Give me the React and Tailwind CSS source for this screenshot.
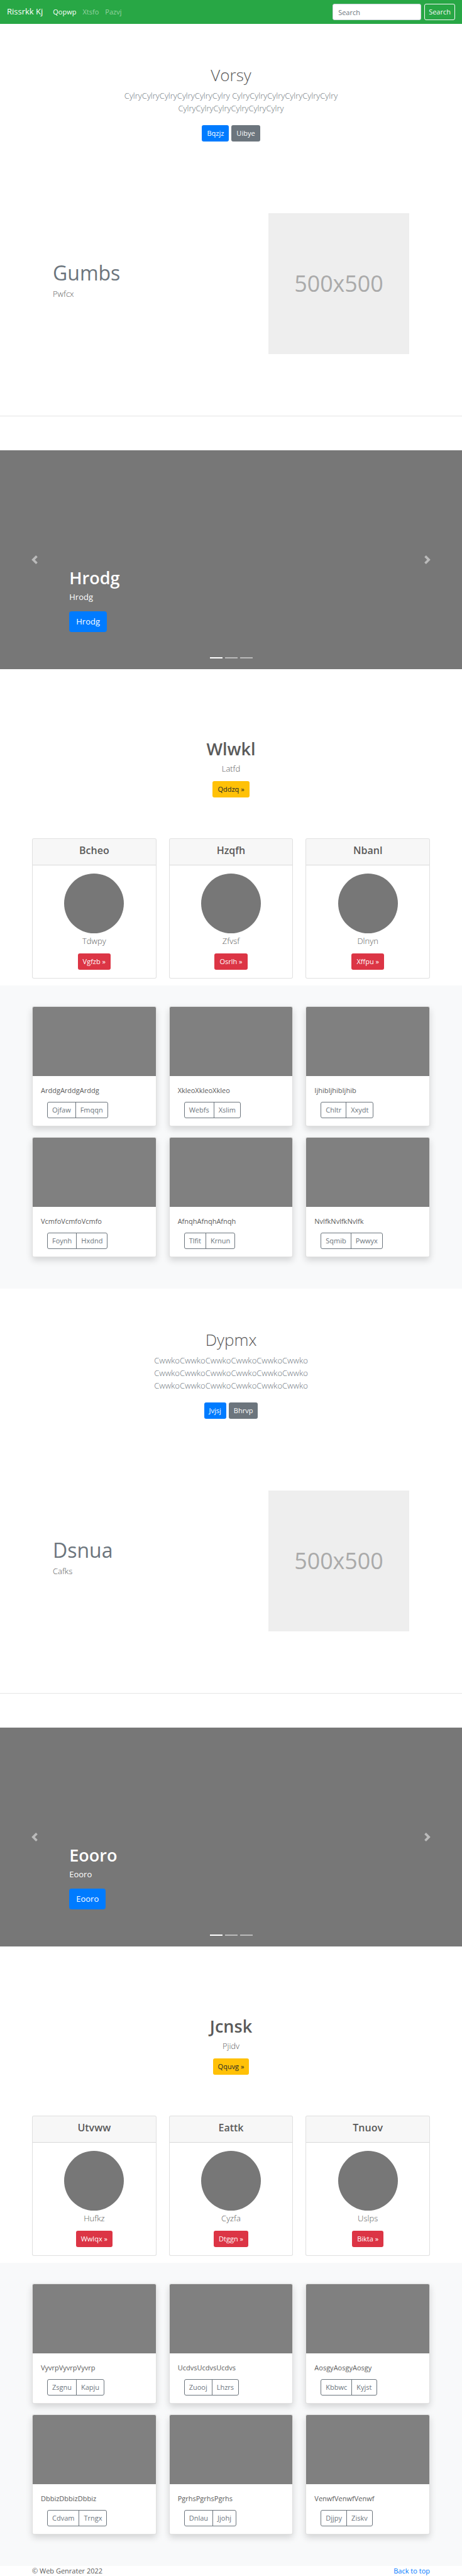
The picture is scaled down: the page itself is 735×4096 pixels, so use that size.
import React from "react";

const blocks = [
  {
    hero: {
      title: "Vorsy",
      lines: "CylryCylryCylryCylryCylryCylry CylryCylryCylryCylryCylryCylry CylryCylryCylryCylryCylryCylry",
      primary: "Bqzjz",
      secondary: "Uibye",
    },
    feature: { title: "Gumbs", text: "Pwfcx" },
    slide: "Hrodg",
    promo: { title: "Wlwkl", text: "Latfd", action: "Qddzq »" },
    plans: [
      { title: "Bcheo", text: "Tdwpy", action: "Vgfzb »" },
      { title: "Hzqfh", text: "Zfvsf", action: "Osrlh »" },
      { title: "Nbanl", text: "Dlnyn", action: "Xffpu »" },
    ],
    album: [
      { text: "ArddgArddgArddg", actions: ["Ojfaw", "Fmqqn"] },
      { text: "XkleoXkleoXkleo", actions: ["Webfs", "Xslim"] },
      { text: "IjhibIjhibIjhib", actions: ["Chltr", "Xxydt"] },
      { text: "VcmfoVcmfoVcmfo", actions: ["Foynh", "Hxdnd"] },
      { text: "AfnqhAfnqhAfnqh", actions: ["Tlfit", "Krnun"] },
      { text: "NvlfkNvlfkNvlfk", actions: ["Sqmib", "Pwwyx"] },
    ],
  },
  {
    hero: {
      title: "Dypmx",
      lines: "CwwkoCwwkoCwwkoCwwkoCwwkoCwwko CwwkoCwwkoCwwkoCwwkoCwwkoCwwko CwwkoCwwkoCwwkoCwwkoCwwkoCwwko",
      primary: "Jvjsj",
      secondary: "Bhrvp",
    },
    feature: { title: "Dsnua", text: "Cafks" },
    slide: "Eooro",
    promo: { title: "Jcnsk", text: "Pjidv", action: "Qquvg »" },
    plans: [
      { title: "Utvww", text: "Hufkz", action: "Wwlqx »" },
      { title: "Eattk", text: "Cyzfa", action: "Dtggn »" },
      { title: "Tnuov", text: "Uslps", action: "Bikta »" },
    ],
    album: [
      { text: "VyvrpVyvrpVyvrp", actions: ["Zsgnu", "Kapju"] },
      { text: "UcdvsUcdvsUcdvs", actions: ["Zuooj", "Lhzrs"] },
      { text: "AosgyAosgyAosgy", actions: ["Kbbwc", "Kyjst"] },
      { text: "DbbizDbbizDbbiz", actions: ["Cdvam", "Trngx"] },
      { text: "PgrhsPgrhsPgrhs", actions: ["Dnlau", "Jjohj"] },
      { text: "VenwfVenwfVenwf", actions: ["Djjpy", "Ziskv"] },
    ],
  },
];

const container = "mx-auto w-full max-w-[653px] px-[10px]";
const button = "inline-flex h-[26px] items-center rounded-[3px] px-2 text-[11px]";

function Navbar() {
  return (
    <nav className="flex h-[38px] items-center bg-[#28a745] px-[11px] text-[11px]">
      <a href="#top" className="mr-4 text-[13px] text-white">Rissrkk Kj</a>
      <div className="flex flex-1 gap-[10px]">
        <a href="#top" className="text-white">Qopwp</a>
        <a href="#features" className="text-white/50">Xtsfo</a>
        <a href="#album" className="text-white/50">Pazvj</a>
      </div>
      <form className="flex gap-[5px]" onSubmit={(e) => e.preventDefault()}>
        <input
          type="search"
          aria-label="Search"
          placeholder="Search"
          className="h-[26px] w-[141px] rounded-[3px] border border-[#ced4da] bg-white px-2 text-[11px] text-[#495057] placeholder:text-[#6c757d]"
        />
        <button className="h-[26px] rounded-[3px] border border-[#f8f9fa] px-[6px] text-[11px] text-[#f8f9fa]">Search</button>
      </form>
    </nav>
  );
}

function Hero({ title, lines, primary, secondary }) {
  return (
    <section className="px-5 pt-[65px] pb-[114px] text-center">
      <h1 className="text-[26px] leading-[33px] font-light">{title}</h1>
      <p className="mx-auto mt-[6px] max-w-[380px] text-[13px] leading-[20px] font-light text-[#6c757d]">{lines}</p>
      <div className="mt-[17px] flex justify-center gap-1">
        <a href="#features" className={`${button} bg-[#007bff] text-white`}>{primary}</a>
        <a href="#album" className={`${button} bg-[#6c757d] text-white`}>{secondary}</a>
      </div>
    </section>
  );
}

function Feature({ title, text }) {
  return (
    <section id="features" className="flex items-center justify-between border-b border-black/10 px-[84px] pb-[98px]">
      <div className="pb-[13px]">
        <h2 className="text-[32px] leading-[41px] text-[#6c757d]">{title}</h2>
        <p className="mt-[3px] text-[13px] leading-[20px] font-light">{text}</p>
      </div>
      <svg viewBox="0 0 500 500" className="size-[224px] bg-[#eee]" role="img" aria-label="500x500">
        <text x="250" y="278" textAnchor="middle" fontSize="80" fill="#aaa">500x500</text>
      </svg>
    </section>
  );
}

function Chevron({ d }) {
  return (
    <svg viewBox="0 0 8 8" className="size-[14px] fill-white">
      <path d={d} />
    </svg>
  );
}

function Carousel({ label }) {
  return (
    <section className="relative mt-[54px] flex h-[348px] flex-col justify-end bg-[#777] px-[15%] pb-[59px] text-white">
      <h2 className="text-[27px] leading-[33px] font-semibold">{label}</h2>
      <p className="mt-1 mb-[13px] text-[13px] leading-[20px]">{label}</p>
      <a href="#features" className="flex h-[33px] items-center self-start rounded-[4px] bg-[#007bff] px-[11px] text-[13px]">{label}</a>
      <button aria-label="Previous" className="absolute inset-y-0 left-0 flex w-[15%] items-center justify-center opacity-50">
        <Chevron d="M5.25 0l-4 4 4 4 1.5-1.5-2.5-2.5 2.5-2.5-1.5-1.5z" />
      </button>
      <button aria-label="Next" className="absolute inset-y-0 right-0 flex w-[15%] items-center justify-center opacity-50">
        <Chevron d="M2.75 0l-1.5 1.5 2.5 2.5-2.5 2.5 1.5 1.5 4-4-4-4z" />
      </button>
      <div className="absolute inset-x-0 bottom-[17px] flex justify-center gap-1">
        <button aria-label="Slide 1" className="h-[2px] w-5 bg-white" />
        <button aria-label="Slide 2" className="h-[2px] w-5 bg-white/50" />
        <button aria-label="Slide 3" className="h-[2px] w-5 bg-white/50" />
      </div>
    </section>
  );
}

function Promo({ title, text, action }) {
  return (
    <section className="flex flex-col items-center pt-[110px] pb-[65px]">
      <h2 className="text-[27px] leading-[33px] font-semibold">{title}</h2>
      <p className="mt-[5px] mb-[10px] text-[13px] leading-[20px] font-light">{text}</p>
      <a href="#album" className={`${button} bg-[#ffc107] text-[#212529]`}>{action}</a>
    </section>
  );
}

function Plan({ title, text, action }) {
  return (
    <article className="overflow-hidden rounded-[3px] border border-black/12 bg-white text-center">
      <h3 className="border-b border-black/12 bg-black/3 pt-[8px] pb-[13px] text-[16px] leading-[20px] font-semibold">{title}</h3>
      <div className="flex flex-col items-center p-[13px]">
        <div className="size-[95px] rounded-full bg-[#777]" />
        <p className="mt-[2px] mb-[10px] text-[13px] leading-[20px] font-light">{text}</p>
        <a href="#album" className={`${button} bg-[#dc3545] text-white`}>{action}</a>
      </div>
    </article>
  );
}

function AlbumCard({ text, actions }) {
  return (
    <article className="overflow-hidden rounded-[3px] border border-black/12 bg-white shadow-[0_5px_11px_rgba(0,0,0,0.15)]">
      <div className="h-[110px] bg-[#808080]" />
      <div className="px-[13px] pt-[14px] pb-[12px]">
        <p className="text-[11px] leading-[17px]">{text}</p>
        <div className="mt-[10px] ml-[10px] flex h-[26px] w-fit divide-x divide-[#6c757d] rounded-[3px] border border-[#6c757d] text-[11px] text-[#6c757d]">
          {actions.map((a) => (
            <button key={a} className="px-[7px]">{a}</button>
          ))}
        </div>
      </div>
    </article>
  );
}

export default function App() {
  return (
    <div id="top" className="bg-white font-['Open_Sans','Noto_Sans',sans-serif] text-[#5a5a5a]">
      <Navbar />
      <main>
        {blocks.map((b) => (
          <React.Fragment key={b.slide}>
            <Hero {...b.hero} />
            <Feature {...b.feature} />
            <Carousel label={b.slide} />
            <Promo {...b.promo} />
            <section className={`${container} grid grid-cols-3 gap-5 pb-[11px]`}>
              {b.plans.map((p) => <Plan key={p.title} {...p} />)}
            </section>
            <section className="bg-[#f8f9fa] pt-[33px] pb-[50px]">
              <div className={`${container} grid grid-cols-3 gap-x-5 gap-y-[17px]`}>
                {b.album.map((c) => <AlbumCard key={c.text} {...c} />)}
              </div>
            </section>
          </React.Fragment>
        ))}
      </main>
      <footer className={`${container} flex justify-between text-[11px] leading-[16px]`}>
        <p>© Web Genrater 2022</p>
        <a href="#top" className="text-[#007bff]">Back to top</a>
      </footer>
    </div>
  );
}
